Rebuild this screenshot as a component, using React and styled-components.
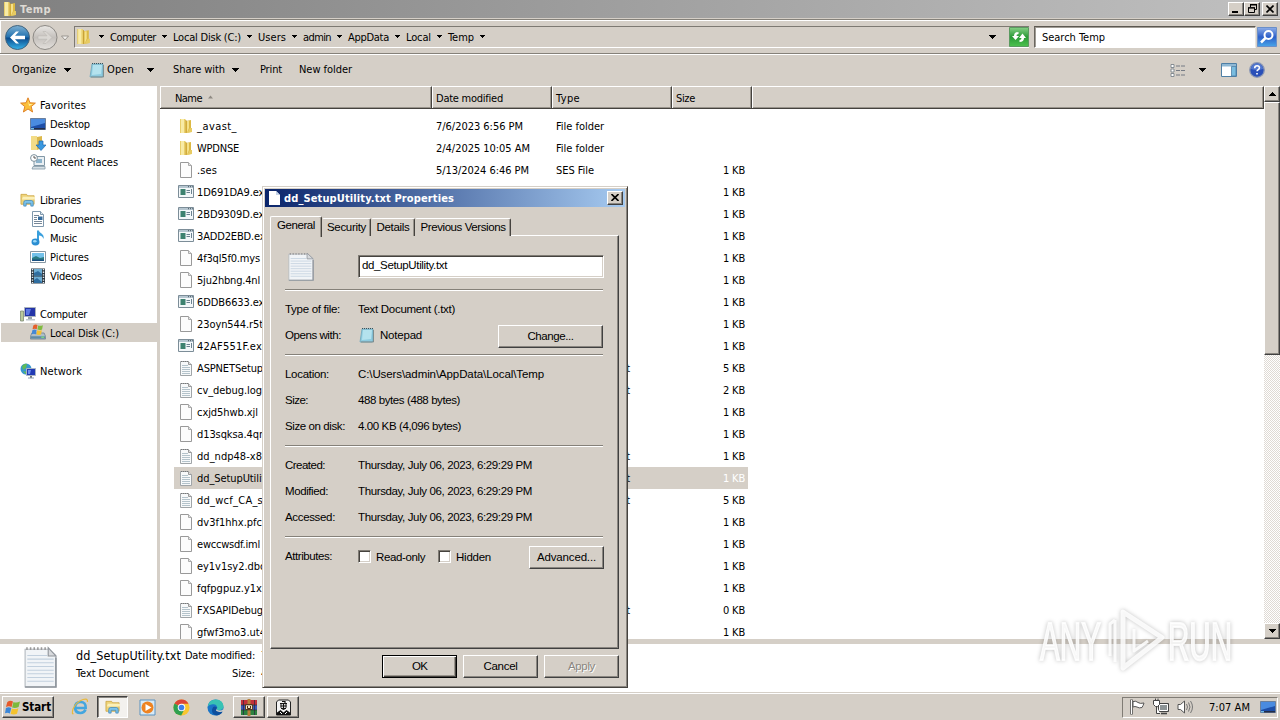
import React, { useLayoutEffect, useRef, useState } from "react";
import styled, { createGlobalStyle, css } from "styled-components";

const face = "#d5cfc7";
const tahoma = `"DejaVu Sans Condensed", "DejaVu Sans", "Noto Sans", sans-serif`;
const msSans = `"Liberation Sans", Arial, sans-serif`;

const Global = createGlobalStyle`
  * { box-sizing: border-box; }
  html, body { margin: 0; padding: 0; overflow: hidden; }
  body { font: 11px/14px ${tahoma}; font-stretch: condensed; color: #000; }
  svg { display: block; flex: none; }
`;

/* ---------- text with a set advance width ---------- */
const Span = styled.span`
  display: inline-block;
  white-space: pre;
  flex: none;
  margin-top: var(--drop, 2px);
`;
function Label({ w, children, ...rest }) {
  const ref = useRef(null);
  const [spacing, setSpacing] = useState(0);
  useLayoutEffect(() => {
    if (!w) return;
    const el = ref.current;
    el.style.letterSpacing = "0px";
    const s = (w - el.getBoundingClientRect().width) / String(children).length;
    el.style.letterSpacing = `${s}px`;
    setSpacing(s);
  }, [w, children]);
  return <Span ref={ref} style={{ letterSpacing: spacing }} {...rest}>{children}</Span>;
}

/* ---------- bevels ---------- */
const raised = css`
  background: ${face};
  border: 1px solid;
  border-color: #fff #404040 #404040 #fff;
  box-shadow: inset -1px -1px 0 #8a8680;
`;

/* ---------- frame ---------- */
const Desktop = styled.div`
  position: relative;
  width: 1280px;
  height: 720px;
  display: flex;
  flex-direction: column;
  background: ${face};
  overflow: hidden;
`;
const TitleBar = styled.div`
  height: 18px;
  flex: none;
  display: flex;
  align-items: center;
  padding: 0 2px 0 1px;
  background: linear-gradient(90deg, #808080, #c0c0c0);
  color: #dedad4;
  font-weight: bold;
`;
const TitleIcon = styled.div`width: 19px; padding-left: 1px;`;
const Grow = styled.div`flex: 1;`;
const WinButton = styled.button`
  ${raised}
  width: 16px;
  height: 14px;
  padding: 0;
  margin: 0 0 1px ${(p) => p.$gap || 0}px;
  display: flex;
  align-items: center;
  justify-content: center;
`;
const AddressRow = styled.div`
  height: 35px;
  flex: none;
  display: flex;
  align-items: center;
  margin-top: 1px;
  padding: 0 2px 0 4px;
  border-top: 1px solid #858179;
  border-bottom: 1px solid #858179;
  box-shadow: inset 1px 1px 0 #fff, 0 1px 0 #fff;
`;
const NavButtons = styled.div`display: flex; width: 70px; flex: none; padding-top: 1px;`;
const AddressBox = styled.div`
  height: 22px;
  width: 955px;
  flex: none;
  display: flex;
  align-items: center;
  border-top: 1px solid #7d7972;
  border-left: 1px solid #7d7972;
  border-bottom: 1px solid #fff;
`;
const ArrowCell = styled.span`
  width: ${(p) => p.$w || 17}px;
  flex: none;
  display: flex;
  justify-content: center;
`;
const SearchBox = styled.div`
  height: 22px;
  width: 222px;
  margin-left: 5px;
  padding-left: 7px;
  display: flex;
  align-items: center;
  background: #fff;
  border: 1px solid;
  border-color: #5c5851 #e8e4de #fff #6a665f;
  box-shadow: inset 1px 1px 0 #a09c95;
`;
const Toolbar = styled.div`
  --drop: 0px;
  height: 32px;
  flex: none;
  display: flex;
  align-items: center;
  padding: 0 15px 0 12px;
`;
const Gap = styled.span`width: ${(p) => p.$w}px; flex: none;`;

/* ---------- body ---------- */
const Body = styled.div`
  height: 553px;
  flex: none;
  display: flex;
`;
const NavPane = styled.nav`
  width: 160px;
  flex: none;
  padding-top: 9px;
  background: linear-gradient(90deg, #fff 157px, ${face} 157px);
`;
const NavItem = styled.div`
  height: 19px;
  margin-left: 1px;
  padding-left: ${(p) => (p.$sub ? 29 : 19)}px;
  margin-bottom: ${(p) => p.$after || 0}px;
  display: flex;
  align-items: center;
  gap: 4px;
  background: ${(p) => (p.$on ? face : "none")};
`;
const ListPane = styled.div`
  width: 1104px;
  flex: none;
  background: #fff;
  display: flex;
  flex-direction: column;
`;
const HeaderRow = styled.div`
  height: 23px;
  flex: none;
  display: flex;
  background: ${face};
  border-bottom: 1px solid #45423e;
`;
const HeaderCell = styled.div`
  width: ${(p) => p.$w}px;
  display: flex;
  align-items: center;
  gap: 6px;
  padding: 0 0 0 ${(p) => p.$pad || 3}px;
  border-top: 1px solid #fff;
  border-left: 1px solid #fff;
  border-right: 1px solid #45423e;
  box-shadow: inset -1px 0 0 #99948c, inset 0 -1px 0 #99948c;
`;
const Rows = styled.div`
  flex: 1;
  overflow: hidden;
  padding: 6px 0 0 14px;
`;
const Row = styled.div`
  width: 574px;
  height: 22px;
  display: grid;
  grid-template-columns: 19px 239px 120px 119px 1fr;
  align-items: center;
  padding-left: 4px;
  background: ${(p) => (p.$on ? face : "none")};
`;
const Size = styled.div`
  text-align: right;
  padding-right: 3px;
  color: ${(p) => (p.$on ? "#fff" : "#000")};
`;
const Scroll = styled.div`
  width: 16px;
  display: flex;
  flex-direction: column;
  background: repeating-conic-gradient(#fff 0 25%, #dfdad4 0 50%) 0 0 / 2px 2px;
`;
const ScrollButton = styled.div`
  ${raised}
  height: ${(p) => p.$h || 16}px;
  flex: none;
  display: flex;
  align-items: center;
  justify-content: center;
`;
const Details = styled.div`
  height: 53px;
  flex: none;
  display: flex;
  border-top: 5px solid ${face};
  background: #fff;
  padding: 2px 0 0 24px;
`;
const DetailText = styled.div`
  display: grid;
  grid-template-columns: 107px auto;
  grid-auto-rows: 18px;
  align-items: center;
  padding: 0 0 0 15px;
`;
const DetailName = styled.div`font-size: 12.5px; white-space: nowrap;`;
const DetailSize = styled.div`padding-left: ${(p) => p.$x || 0}px; display: flex; gap: 6px;`;

/* ---------- taskbar ---------- */
const Taskbar = styled.div`
  height: 28px;
  flex: none;
  display: flex;
  align-items: center;
  border-top: 1px solid ${face};
  box-shadow: inset 0 1px 0 #fff;
  padding: 3px 2px 2px 2px;
`;
const TaskButton = styled.button`
  --drop: 0px;
  ${raised}
  width: ${(p) => p.$w}px;
  height: 22px;
  padding: 0;
  margin: 0 ${(p) => p.$r || 0}px 0 0;
  display: flex;
  align-items: center;
  justify-content: center;
  gap: 2px;
  font: bold 11.5px/14px ${tahoma};
  font-stretch: condensed;
  color: #000;
  ${(p) => p.$down && css`
    background: #f3f1ee;
    border-color: #404040 #fff #fff #404040;
    box-shadow: inset 1px 1px 0 #8a8680;
  `}
`;
const Quick = styled.div`width: 34px; display: flex; justify-content: center;`;
const Tray = styled.div`
  width: 156px;
  height: 21px;
  display: flex;
  align-items: center;
  padding-left: 5px;
  border: 1px solid;
  border-color: #807c75 #fff #fff #807c75;
`;

/* ---------- dialog ---------- */
const Dialog = styled.section`
  --drop: 0px;
  position: absolute;
  left: 262px;
  top: 186px;
  width: 366px;
  height: 502px;
  padding: 2px;
  background: ${face};
  border: 1px solid;
  border-color: ${face} #45423e #45423e ${face};
  box-shadow: inset 1px 1px 0 #fff, inset -1px -1px 0 #8a8680;
  font: 11.5px/14px ${msSans};
`;
const DialogTitle = styled.header`
  --drop: 2px;
  height: 18px;
  display: flex;
  align-items: center;
  padding: 0 2px 0 2px;
  background: linear-gradient(90deg, #0a246a, #a6caf0);
  color: #fff;
  font: bold 11px/14px ${tahoma};
  font-stretch: condensed;
`;
const Tabs = styled.div`
  display: flex;
  align-items: flex-end;
  height: 20px;
  margin: 9px 0 -1px 5px;
`;
const Tab = styled.div`
  position: relative;
  z-index: ${(p) => (p.$on ? 1 : 0)};
  width: ${(p) => p.$w}px;
  height: ${(p) => (p.$on ? 21 : 18)}px;
  margin-bottom: ${(p) => (p.$on ? -1 : 0)}px;
  padding-top: 1px;
  text-align: center;
  background: ${face};
  border: 1px solid;
  border-color: #fff #45423e transparent ${(p) => (p.$on ? "#fff" : face)};
  border-bottom: 0;
  border-radius: 2px 2px 0 0;
  box-shadow: inset -1px 0 0 #99948c;
`;
const Page = styled.div`
  ${raised}
  width: 349px;
  height: 414px;
  margin-left: 5px;
  padding: 19px 14px 0 14px;
`;
const Line = styled.div`
  display: flex;
  align-items: center;
  height: ${(p) => p.$h || 26}px;
`;
const Key = styled.div`width: 73px; flex: none; padding: 0 0 ${(p) => p.$up || 0}px ${(p) => p.$x || 0}px;`;
const Rule = styled.hr`
  width: 318px;
  height: 2px;
  border: 0;
  border-top: 1px solid #858179;
  border-bottom: 1px solid #fff;
  margin: ${(p) => p.$t}px 0 ${(p) => p.$b}px;
`;
const Field = styled.div`
  width: 246px;
  height: 23px;
  padding: 0 3px 3px;
  background: #fff;
  border: 1px solid;
  border-color: #807c75 #fff #fff #807c75;
  box-shadow: inset 1px 1px 0 #45423e, inset -1px -1px 0 ${face};
  display: flex;
  align-items: center;
`;
const Button = styled.button`
  ${raised}
  width: ${(p) => p.$w || 75}px;
  height: 23px;
  flex: none;
  padding: 0 0 1px;
  margin: ${(p) => p.$t || 0}px 0 0 ${(p) => p.$l || 0}px;
  font: 11.5px/14px ${msSans};
  color: #000;
  ${(p) => p.$primary && css`
    border-color: #000;
    box-shadow: inset 1px 1px 0 #fff, inset -1px -1px 0 #45423e, inset -2px -2px 0 #99948c;
  `}
  ${(p) => p.$off && css`color: #8a8680; text-shadow: 1px 1px 0 #fff;`}
`;
const Check = styled.span`
  width: 13px;
  height: 13px;
  flex: none;
  margin: 0 5px 2px 0;
  background: #fff;
  border: 1px solid;
  border-color: #807c75 #fff #fff #807c75;
  box-shadow: inset 1px 1px 0 #45423e, inset -1px -1px 0 ${face};
`;
const Footer = styled.footer`
  display: flex;
  justify-content: flex-end;
  gap: 6px;
  padding: 6px 6px 0 0;
`;
const Watermark = styled.svg`
  position: absolute;
  left: 1032px;
  top: 602px;
  overflow: visible;
  filter: drop-shadow(0 0 2px rgba(0, 0, 0, 0.28));
`;

/* ---------- icons ---------- */
const Down = ({ s = 7, up }) => (
  <svg width={s} height={(s + 1) / 2} viewBox="0 0 8 4" preserveAspectRatio="none" shapeRendering="crispEdges">
    <path d={up ? "M4 0L8 4H0z" : "M0 0H8L4 4z"} fill="#000" />
  </svg>
);
const Folder = ({ s = 16 }) => (
  <svg width={s} height={s} viewBox="0 0 16 16">
    <path d="M2 1h5l1 1v13H2z" fill="#e9cf6c" />
    <path d="M3 1h3v14H3z" fill="#f8eba6" />
    <path d="M8 3l5-1v12l-5 1z" fill="#dcb944" />
    <path d="M9 3h2v7l-2 5z" fill="#f4e08a" />
    <path d="M12 10h2v4l-5 1z" fill="#e7cb63" />
    <path d="M8 2v13" stroke="#c49b2d" strokeWidth=".8" />
  </svg>
);
const Blank = () => (
  <svg width="16" height="16" viewBox="0 0 16 16">
    <path d="M2.5.5h8l3 3v12h-11z" fill="#fcfcfc" stroke="#999" />
    <path d="M10.5.5v3h3" fill="#e4e4e4" stroke="#aaa" />
  </svg>
);
const TextFile = () => (
  <svg width="16" height="16" viewBox="0 0 16 16">
    <path d="M2.5 1.5h8l3 3v11h-11z" fill="#f7f9fa" stroke="#a0a5a8" />
    <path d="M10.5 1.5v3h3" fill="#ddd" stroke="#999" />
    <path d="M4 5.5h6M4 7.5h8M4 9.5h8M4 11.5h8M4 13.5h8" stroke="#b4c3cb" />
    <path d="M3 1.5h7" stroke="#777" strokeDasharray="1 1" />
  </svg>
);
const Exe = () => (
  <svg width="16" height="16" viewBox="0 0 16 16">
    <path d="M.5 1.5h15v12H.5z" fill="#f4f8fa" stroke="#7c8d98" />
    <path d="M1 2h14v2H1z" fill="#b6c6d0" />
    <path d="M10 2.7h1M12 2.7h1M14 2.7h.8" stroke="#47555f" />
    <path d="M2.5 5h5v6h-5z" fill="#3d8270" />
    <path d="M8.5 6.5H12M8.5 8.5H12M13.5 5v5" stroke="#6b8290" />
  </svg>
);
const Note = ({ w = 26, h = 30 }) => (
  <svg width={w} height={h} viewBox="0 0 30 40" preserveAspectRatio="none">
    <path d="M1 3h22l6 6v30H1z" fill="#f1f4f7" stroke="#b3b8bf" />
    <path d="M3 9h18M3 12.5h24M3 16h24M3 19.5h24M3 23h24M3 26.5h24M3 30h24M3 33.5h24" stroke="#c2d0de" />
    <path d="M22 1.5v8h7z" fill="#d8dadd" stroke="#8f949a" />
    <path d="M2 2.500h20" stroke="#999" strokeWidth="2.500" strokeDasharray="1.4 1.9" />
    <path d="M1 39h28V11" stroke="#8f959c" strokeWidth="1.5" fill="none" />
  </svg>
);
const Notepad = () => (
  <svg width="16" height="16" viewBox="0 0 16 16">
    <path d="M3 2h11v12l-1 1H1z" fill="#8ecbdf" stroke="#6fa6ba" strokeWidth=".8" />
    <path d="M4 3h9l-1 9-9 1z" fill="#b4e2ee" />
    <path d="M14.5 3v12H2" stroke="#7e8d8e" fill="none" />
    <path d="M3 1.5h11" stroke="#39515b" strokeDasharray="1 1" />
  </svg>
);
const Star = () => (
  <svg width="16" height="16" viewBox="0 0 16 16">
    <path d="M8 .8l2 5 5.4.3-4.2 3.5 1.4 5.4L8 12l-4.6 3 1.4-5.4L.6 6.1 6 5.8z" fill="#fbbf3b" stroke="#dd7a1d" strokeWidth=".9" />
    <path d="M8 3l1.2 4H13L9 9z" fill="#fff0a0" />
  </svg>
);
const Screen = () => (
  <svg width="16" height="16" viewBox="0 0 16 16">
    <path d="M.5 2.5h15v11H.5z" fill="#1d4ea8" stroke="#6a7f9c" />
    <path d="M1 3h14v4L1 11z" fill="#4a8be0" />
    <path d="M1 12h14v1.5H1z" fill="#222d48" /><path d="M1 12h3v1.5H1z" fill="#6fb9e8" />
  </svg>
);
const Downloads = () => (
  <svg width="16" height="16" viewBox="0 0 16 16">
    <path d="M1 1h6v14H1z" fill="#f3dc87" /><path d="M7 2l5-1v12l-5 2z" fill="#dcb84b" />
    <path d="M9 6h4v4h3l-5 5.5L6 10h3z" fill="#3998e0" stroke="#1f68ae" strokeWidth=".7" />
  </svg>
);
const Recent = () => (
  <svg width="16" height="16" viewBox="0 0 16 16">
    <path d="M4 2.5h10.5v9H4z" fill="#e9eff3" stroke="#8298a6" />
    <path d="M6 5h6v4H6z" fill="#8db4cc" />
    <path d="M3 12.5h12v2.5H2z" fill="#d7e0e5" stroke="#8298a6" strokeWidth=".8" />
    <circle cx="4" cy="4" r="3.4" fill="#fff" stroke="#7c909c" /><path d="M4 2v2h2" stroke="#555" fill="none" />
  </svg>
);
const Library = () => (
  <svg width="16" height="16" viewBox="0 0 17 16">
    <path d="M1 2h6l1 1.5h7v9H1z" fill="#eed37a" stroke="#c9a23e" strokeWidth=".8" />
    <path d="M3 4.5h13v3H2z" fill="#fbf0b9" />
    <path d="M4 14.5v-4q0-2 2-2h6q2 0 2 2v4h-2.5v-3h-5v3z" fill="#7cc3ec" stroke="#3d87bb" strokeWidth=".8" />
  </svg>
);
const Docs = () => (
  <svg width="16" height="16" viewBox="0 0 16 16">
    <path d="M2.5.5h8l3 3v12h-11z" fill="#fff" stroke="#7f98ad" />
    <path d="M10.5.5v3h3" fill="#dce6ee" stroke="#7f98ad" />
    <path d="M4 4.5h5M4 6.5h3M4 8.5h3M4 10.5h8M4 12.5h8" stroke="#789" />
    <path d="M8 5.5h4.5v3.5H8z" fill="#356b9c" />
  </svg>
);
const MusicIcon = () => (
  <svg width="16" height="16" viewBox="0 0 16 16">
    <path d="M7 .5h2c0 3 6 3 4.500 8.500-1-3-2.500-3.500-4.500-3.500v7H7z" fill="#3aa0dd" />
    <ellipse cx="5.5" cy="12" rx="4" ry="3.4" fill="#2b8ed2" /><ellipse cx="4.8" cy="11.2" rx="1.8" ry="1.3" fill="#9bd8f7" />
  </svg>
);
const Pics = () => (
  <svg width="16" height="16" viewBox="0 0 16 16">
    <path d="M.5 2.5h15v11H.5z" fill="#fff" stroke="#8797a3" />
    <path d="M2 4h12v8H2z" fill="#73c1ea" /><path d="M2 9l4-2 4 2 4-1v4H2z" fill="#297b83" /><path d="M2 10.5h12V12H2z" fill="#184f80" />
  </svg>
);
const Video = () => (
  <svg width="16" height="16" viewBox="0 0 16 16">
    <path d="M1 .5h14v15H1z" fill="#2c3842" />
    <path d="M4 1h8v6.5H4zM4 8.5h8V15H4z" fill="#6eaed4" />
    <path d="M4 5l4-2 4 3v1.5H4zM4 12l3-2 5 4v1H4z" fill="#2f6ea0" />
    <path d="M2.5 1v14M13.5 1v14" stroke="#e8eef2" strokeWidth="1.4" strokeDasharray="1.3 1.3" />
  </svg>
);
const Computer = () => (
  <svg width="16" height="16" viewBox="0 0 16 16">
    <path d="M.5 5h3v10h-3z" fill="#b9c99a" stroke="#7d8c76" strokeWidth=".8" />
    <path d="M4.5 1.5h11v9h-11z" fill="#2334a8" stroke="#aab3bd" />
    <path d="M6 3h5l-2 6H6z" fill="#5c78e2" /><path d="M8 11h4v2H8z" fill="#97a2ab" /><path d="M6 13h9v1.5H6z" fill="#bcc6cd" />
  </svg>
);
const WinFlag = ({ s = 16 }) => (
  <svg width={s} height={s} viewBox="0 0 16 16">
    <path d="M2.500 2q3-2 6-.5L7 7.500Q4 6 1 7.5z" fill="#e6592a" />
    <path d="M9 2q3 1.500 7-.5l-1.500 6Q11 9 7.600 8z" fill="#7cb93b" />
    <path d="M1 8.500q3-1.500 5.700 0L5.200 14.500Q3 13 0 14z" fill="#3a86d8" />
    <path d="M7.300 9q3 1.500 7-.3l-1.500 6Q10 16 6 15z" fill="#f5c32d" />
  </svg>
);
const Disk = () => (
  <svg width="16" height="17" viewBox="0 0 17 17">
    <path d="M2 9h13l1.5 3.500v3H.5v-3z" fill="#aebdc8" stroke="#6d7f8c" strokeWidth=".8" />
    <path d="M1 12.5h15v2.500H1z" fill="#5f8ba5" /><path d="M12 13.5h3" stroke="#83ec76" strokeWidth="1.2" />
    <path d="M3.500 1q2-1.500 4.500-.5l-.8 4.500Q5 4 2.700 5z" fill="#e5602c" /><path d="M8.700 1q2 1 5-.3l-.9 4.500q-2 1-5 .2z" fill="#80bb3f" />
    <path d="M2.500 6q2-1 4.500-.2L6.300 10.400Q4 9.400 1.700 10.400z" fill="#4388d5" /><path d="M7.600 6.200q2 1 5 0l-.9 4.500q-2 1-4.900 0z" fill="#f2c134" />
  </svg>
);
const NetworkIcon = () => (
  <svg width="16" height="16" viewBox="0 0 16 16">
    <circle cx="6" cy="6" r="5.5" fill="#3796cf" /><path d="M2 3q3-3 5-2l-1 4-3 2zM3 8l4 1-1 2.500z" fill="#5ebb58" />
    <path d="M6.5 5.5h9v7h-9z" fill="#213bb5" stroke="#a9b5c4" /><path d="M8 7h3l-1 4H8z" fill="#6d8df0" />
    <path d="M10 13h2v2h-2z" fill="#777" /><path d="M8 15h6" stroke="#8ba0b1" />
  </svg>
);
const BackBtn = () => (
  <svg width="27" height="27" viewBox="0 0 27 27">
    <defs><linearGradient id="bk" x2="0" y2="1"><stop stopColor="#7eb0d2" /><stop offset=".48" stopColor="#2272b0" /><stop offset=".52" stopColor="#0a4a8c" /><stop offset="1" stopColor="#37b4ea" /></linearGradient></defs>
    <circle cx="13.5" cy="13.5" r="12" fill="url(#bk)" stroke="#42647d" />
    <path d="M6 13.5l6-6h3l-4 4.300h10v3.400H11l4 4.300h-3z" fill="#fff" />
  </svg>
);
const FwdBtn = () => (
  <svg width="27" height="27" viewBox="0 0 27 27">
    <defs><linearGradient id="fw" x2="0" y2="1"><stop stopColor="#e9e7e4" /><stop offset=".5" stopColor="#c4c0bc" /><stop offset="1" stopColor="#e4e1dd" /></linearGradient></defs>
    <circle cx="14" cy="13.5" r="12" fill="url(#fw)" stroke="#8c8984" />
    <path d="M21 13.5l-6-6h-3l4 4.300H7v3.400h9l-4 4.300h3z" fill="#dad7d3" stroke="#bbb7b2" strokeWidth=".6" />
  </svg>
);
const Refresh = () => (
  <svg width="20" height="20" viewBox="0 0 20 20">
    <defs><linearGradient id="rf" x2="0" y2="1"><stop stopColor="#86cf86" /><stop offset=".5" stopColor="#2a9a36" /><stop offset="1" stopColor="#4cc24e" /></linearGradient></defs>
    <path d="M.5.5h19v19H.5z" fill="url(#rf)" stroke="#5a9a60" />
    <path d="M3 9h2q0-4 4.500-4v2Q7.500 7 7.500 9H10l-3.500 4zM17 11h-2q0 4-4.500 4v-2q2 0 2-2H10l3.500-4.500z" fill="#fff" />
  </svg>
);
const SearchIcon = () => (
  <svg width="20" height="20" viewBox="0 0 20 20">
    <defs><linearGradient id="sr" x2="0" y2="1"><stop stopColor="#8eaee8" /><stop offset=".5" stopColor="#2d5fc9" /><stop offset="1" stopColor="#48a5e8" /></linearGradient></defs>
    <path d="M.5.5h19v19H.5z" fill="url(#sr)" stroke="#6b8fc8" />
    <circle cx="11.5" cy="8" r="4" fill="none" stroke="#fff" strokeWidth="2" /><path d="M8.500 11L4 15.500" stroke="#fff" strokeWidth="2.5" />
  </svg>
);
const Views = () => (
  <svg width="16" height="13" viewBox="0 0 16 13">
    <path d="M1 .5h3v3H1zM1 5h3v3H1zM1 9.500h3v3H1z" fill="#fff" stroke="#7b838b" strokeWidth=".9" />
    <path d="M6 2h4M11 2h4M6 6.500h4M11 6.500h4M6 11h4M11 11h4" stroke="#757b84" />
  </svg>
);
const Preview = () => (
  <svg width="16" height="14" viewBox="0 0 16 14">
    <path d="M.5.5h15v13H.5z" fill="#fff" stroke="#4e7fa5" /><path d="M1 1h14v2.500H1z" fill="#8fb8d4" />
    <path d="M10.500 3.500h4.500V13h-4.500z" fill="#79bde0" stroke="#4e7fa5" strokeWidth=".8" />
  </svg>
);
const Help = () => (
  <svg width="16" height="16" viewBox="0 0 16 16">
    <circle cx="8" cy="8" r="7.3" fill="#2a4fb8" stroke="#8d99b5" strokeWidth="1.3" /><path d="M2 7a6 5.500 0 0112 0q-6 2-12 0z" fill="#6e92de" opacity=".6" />
    <path d="M5.700 6.200q0-2.400 2.400-2.400t2.300 2q0 1.200-1.300 1.900-1 .5-1 1.600M8 11v1.500" fill="none" stroke="#fff" strokeWidth="1.6" />
  </svg>
);
const IE = () => (
  <svg width="18" height="18" viewBox="0 0 18 18">
    <path d="M4.500 10h10.200q.3-6-5.200-6t-5.500 6q.5 5 5.500 5 3.500 0 5-3.200" fill="none" stroke="#43a6df" strokeWidth="2.6" />
    <path d="M2.500 15.500Q.5 17 2 11 5 4 12 1.500q5-1.500 4.500 2.500" fill="none" stroke="#e9b93c" strokeWidth="1.2" />
  </svg>
);
const Media = () => (
  <svg width="17" height="17" viewBox="0 0 17 17">
    <path d="M1 1h15v15H1z" fill="#d8eaf6" stroke="#5a92c0" /><circle cx="8.5" cy="8.5" r="6" fill="#ee8322" /><path d="M6.500 5l6 3.500-6 3.500z" fill="#fff" />
  </svg>
);
const Chrome = () => (
  <svg width="17" height="17" viewBox="0 0 18 18">
    <circle cx="9" cy="9" r="8.5" fill="#f9c62f" /><path d="M9 9L1.600 4.700A8.500 8.500 0 0116.400 5H9z" fill="#dc4437" />
    <path d="M9 9L1.600 4.700A8.500 8.500 0 008.700 17.500L12 11z" fill="#2fa050" /><circle cx="9" cy="9" r="4" fill="#fff" /><circle cx="9" cy="9" r="3" fill="#3f7fe8" />
  </svg>
);
const Edge = () => (
  <svg width="17" height="17" viewBox="0 0 18 18">
    <circle cx="9" cy="9" r="8.5" fill="#1b75c7" /><path d="M.7 8Q2 .5 9.500.5q7.500.5 8 7 0 4-4.500 4.500-4-.2-2-3Q10 5 6 5.500 2 5.700.7 8z" fill="#38c3b4" />
    <path d="M10.500 9q-2 5 6 4.500-2 3.500-6 4Q4 16 5.500 10.500 7 6.500 10.500 9z" fill="#0e4f9e" /><path d="M11 9q-1.500 3 2 3.200 3 .3 4.500-2v3Q12 14.500 9.500 12.500z" fill="#d5cfc7" />
  </svg>
);
const Rar = () => (
  <svg width="18" height="17" viewBox="0 0 18 17">
    <path d="M1 1h16v5H1z" fill="#c2303a" /><path d="M1 6h16v5H1z" fill="#3d58b5" /><path d="M1 11h16v5H1z" fill="#2c8242" />
    <path d="M7.500 0h3v17h-3z" fill="#b9803a" /><path d="M5.500 5.500h7v5h-7z" fill="#f2e4c5" stroke="#6a431d" /><path d="M7.500 7v2.500h3V7" stroke="#4a2c12" fill="none" />
    <path d="M3.500 1v15M14.500 1v15" stroke="#2a2540" strokeWidth=".7" /><path d="M1 6h16M1 11h16" stroke="#222" strokeWidth=".5" />
  </svg>
);
const Agent = () => (
  <svg width="17" height="17" viewBox="0 0 17 17">
    <path d="M1.500 3l2-2h10l2 2v13h-14z" fill="#f4f4f4" stroke="#222" />
    <path d="M5 4.500h7M7 2.500h3v2M8.500 4.500v6M5.500 7h6M6 9.500h5" stroke="#111" strokeWidth="1.2" fill="none" />
    <path d="M6 4.500v4q2.500 4 5 0v-4" fill="none" stroke="#111" />
    <path d="M2 16v-2.500l3.500-2.500 3 2.500 3-2.500 3.500 2.500V16z" fill="#111" /><path d="M5 13l2 2M12 13l-2 2" stroke="#fff" />
  </svg>
);
const Flag = () => (
  <svg width="18" height="18" viewBox="0 0 18 18">
    <path d="M3.500 1.500v15" stroke="#555" strokeWidth="2.6" /><path d="M3.500 2v14" stroke="#fff" strokeWidth="1" />
    <path d="M5 3.500q3-1 5 1 2 1.500 6 .5-1 3-2 4.500-3 1-5-.5-2-1-4 0z" fill="#fff" stroke="#555" />
  </svg>
);
const TrayNet = () => (
  <svg width="18" height="18" viewBox="0 0 18 18">
    <path d="M6.500 5.500h10v8h-10z" fill="#8d9496" stroke="#444" /><path d="M7.500 6.500h8v6h-8z" fill="none" stroke="#fff" />
    <path d="M9 15.500h6" stroke="#444" strokeWidth="1.6" /><path d="M1.500 2.500h6v4l-2 2h-2l-2-2zM4.500 8v7.500H8" fill="#fff" stroke="#444" /><path d="M3.500.5v2M6 .5v2" stroke="#444" />
  </svg>
);
const Speaker = () => (
  <svg width="18" height="18" viewBox="0 0 18 18">
    <path d="M2 6.500h2.500L8.500 3v12l-4-3.500H2z" fill="#fff" stroke="#555" /><path d="M10.500 6q2 3 0 6M12.500 4.500q3 4.500 0 9M14.500 3q4 6 0 12" fill="none" stroke="#777" />
  </svg>
);

/* ---------- data ---------- */
const nav = [
  ["Favorites", 46, Star, 0],
  ["Desktop", 40, Screen, 1],
  ["Downloads", 53, Downloads, 1],
  ["Recent Places", 68, Recent, 1, 19],
  ["Libraries", 41, Library, 0],
  ["Documents", 54, Docs, 1],
  ["Music", 27, MusicIcon, 1],
  ["Pictures", 39, Pics, 1],
  ["Videos", 32, Video, 1, 19],
  ["Computer", 47, Computer, 0],
  ["Local Disk (C:)", 69, Disk, 1, 19],
  ["Network", 42, NetworkIcon, 0],
];
const kinds = { d: Folder, b: Blank, e: Exe, t: TextFile };
const typeName = { d: ["File folder", 48], b: ["File", 17], e: ["Application", 54], t: ["Text Document", 74] };
const files = [
  ["_avast_", 40, "d", "", "7/6/2023 6:56 PM", 87],
  ["WPDNSE", 42, "d", "", "2/4/2025 10:05 AM", 94],
  [".ses", 20, "b", "1", "5/13/2024 6:46 PM", 93],
  ["1D691DA9.exe", 73, "e", "1"],
  ["2BD9309D.exe", 73, "e", "1"],
  ["3ADD2EBD.exe", 74, "e", "1"],
  ["4f3ql5f0.mys", 63, "b", "1"],
  ["5ju2hbng.4nl", 63, "b", "1"],
  ["6DDB6633.exe", 73, "e", "1"],
  ["23oyn544.r5t", 66, "b", "1"],
  ["42AF551F.exe", 71, "e", "1"],
  ["ASPNETSetup", 66, "t", "5"],
  ["cv_debug.log", 65, "t", "2"],
  ["cxjd5hwb.xjl", 61, "b", "1"],
  ["d13sqksa.4qr", 66, "b", "1"],
  ["dd_ndp48-x8", 65, "t", "1"],
  ["dd_SetupUtility.txt", 89, "t", "1"],
  ["dd_wcf_CA_s", 66, "t", "5"],
  ["dv3f1hhx.pfc", 65, "b", "1"],
  ["ewccwsdf.iml", 63, "b", "1"],
  ["ey1v1sy2.dbo", 69, "b", "1"],
  ["fqfpgpuz.y1x", 65, "b", "1"],
  ["FXSAPIDebug", 66, "t", "0"],
  ["gfwf3mo3.ut4", 69, "b", "1"],
];
const crumbs = [["Computer", 46], ["Local Disk (C:)", 68], ["Users", 28], ["admin", 28], ["AppData", 41], ["Local", 25], ["Temp", 26]];
const stamp = "Thursday, July 06, 2023, 6:29:29 PM";

const Info = ({ k, kw, v, vw }) => (
  <Line><Key><Label w={kw}>{k}</Label></Key><Label w={vw}>{v}</Label></Line>
);

function Properties() {
  return (
    <Dialog>
      <DialogTitle>
        <svg width="16" height="14" viewBox="0 0 16 14"><path d="M2 0h7l4 4v10H2z" fill="#fff" /><path d="M9 0v4h4" fill="#c5d4e8" /></svg>
        <Gap $w={1} /><Label w={170}>dd_SetupUtility.txt Properties</Label>
        <Grow />
        <WinButton><svg width="8" height="7" viewBox="0 0 8 7"><path d="M.5 0L7.500 7M7.500 0L.5 7" stroke="#000" strokeWidth="1.6" /></svg></WinButton>
      </DialogTitle>
      <Tabs>
        <Tab $on $w={52}><Label w={38}>General</Label></Tab>
        <Tab $w={49}><Label w={39}>Security</Label></Tab>
        <Tab $w={44}><Label w={33}>Details</Label></Tab>
        <Tab $w={96}><Label w={85}>Previous Versions</Label></Tab>
      </Tabs>
      <Page>
        <Line $h={23}>
          <Key $x={3} $up={1}><Note w={26} h={29} /></Key>
          <Field><Label w={85}>dd_SetupUtility.txt</Label></Field>
        </Line>
        <Rule $t={11} $b={5} />
        <Info k="Type of file:" kw={55} v="Text Document (.txt)" vw={97} />
        <Line>
          <Key><Label w={56}>Opens with:</Label></Key>
          <Gap $w={1} /><Notepad /><Gap $w={5} /><Label w={42}>Notepad</Label><Button $w={105} $l={76} $t={2}><Label w={46}>Change...</Label></Button>
        </Line>
        <Rule $t={6} $b={5} />
        <Info k="Location:" kw={44} v="C:\Users\admin\AppData\Local\Temp" vw={186} />
        <Info k="Size:" kw={23} v="488 bytes (488 bytes)" vw={102} />
        <Info k="Size on disk:" kw={60} v="4.00 KB (4,096 bytes)" vw={103} />
        <Rule $t={6} $b={5} />
        <Info k="Created:" kw={40} v={stamp} vw={174} />
        <Info k="Modified:" kw={43} v={stamp} vw={174} />
        <Info k="Accessed:" kw={50} v={stamp} vw={174} />
        <Rule $t={6} $b={6} />
        <Line>
          <Key $up={2}><Label w={47}>Attributes:</Label></Key>
          <Check /><Label w={49}>Read-only</Label>
          <Gap $w={13} /><Check /><Label w={35}>Hidden</Label>
          <Button $l={38}><Label w={59}>Advanced...</Label></Button>
        </Line>
      </Page>
      <Footer>
        <Button $primary><Label w={15}>OK</Label></Button>
        <Button><Label w={34}>Cancel</Label></Button>
        <Button $off><Label w={27}>Apply</Label></Button>
      </Footer>
    </Dialog>
  );
}

export default function App() {
  return (
    <Desktop>
      <Global />
      <TitleBar>
        <TitleIcon><Folder /></TitleIcon>
        <Label w={31}>Temp</Label>
        <Grow />
        <WinButton><svg width="8" height="8"><path d="M0 6h6v2H0z" /></svg></WinButton>
        <WinButton><svg width="9" height="9"><path d="M2.500 1v2M2 1h6.500v4.500H7M2 .5h7M.5 4h6v4.500h-6zM0 3.700h7" fill="none" stroke="#000" /></svg></WinButton>
        <WinButton $gap={2}><svg width="8" height="8"><path d="M.5.5l7 7M7.500.5l-7 7" stroke="#000" strokeWidth="1.6" /></svg></WinButton>
      </TitleBar>
      <AddressRow>
        <NavButtons>
          <BackBtn /><FwdBtn />
          <ArrowCell $w={14}><svg width="8" height="27"><path d="M.5 12h7L4 16z" fill="#f1efec" stroke="#8a8680" strokeWidth=".8" /></svg></ArrowCell>
        </NavButtons>
        <AddressBox>
          <Folder s={17} /><ArrowCell $w={18}><Down s={5} /></ArrowCell>
          {crumbs.map(([t, w]) => (
            <React.Fragment key={t}><Label w={w}>{t}</Label><ArrowCell><Down s={5} /></ArrowCell></React.Fragment>
          ))}
          <Grow /><ArrowCell $w={33}><Down /></ArrowCell><Refresh />
        </AddressBox>
        <SearchBox><Label w={63}>Search Temp</Label></SearchBox>
        <Gap $w={1} /><SearchIcon />
      </AddressRow>
      <Toolbar>
        <Label w={44}>Organize</Label><Gap $w={8} /><Down /><Gap $w={18} />
        <Notepad /><Gap $w={2} /><Label w={27}>Open</Label><Gap $w={13} /><Down /><Gap $w={19} />
        <Label w={52}>Share with</Label><Gap $w={7} /><Down /><Gap $w={21} />
        <Label w={22}>Print</Label><Gap $w={17} /><Label w={53}>New folder</Label>
        <Grow />
        <Views /><Gap $w={13} /><Down /><Gap $w={15} /><Preview /><Gap $w={12} /><Help />
      </Toolbar>
      <Body>
        <NavPane>
          {nav.map(([t, w, Icon, sub, after]) => (
            <NavItem key={t} $sub={sub} $after={after} $on={t === "Local Disk (C:)"}><Icon /><Label w={w}>{t}</Label></NavItem>
          ))}
        </NavPane>
        <ListPane>
          <HeaderRow>
            <HeaderCell $w={272} $pad={14}><Label w={27}>Name</Label><svg width="5" height="8"><path d="M2.500 1.500L5 4.500H0z" fill="#8f8a83" /></svg></HeaderCell>
            <HeaderCell $w={120}><Label w={67}>Date modified</Label></HeaderCell>
            <HeaderCell $w={120}><Label w={24}>Type</Label></HeaderCell>
            <HeaderCell $w={80}><Label w={19}>Size</Label></HeaderCell>
            <HeaderCell $w={512} />
          </HeaderRow>
          <Rows>
            {files.map(([name, w, kind, kb, date, dw], i) => {
              const Icon = kinds[kind];
              const [type, tw] = name === ".ses" ? ["SES File", 38] : typeName[kind];
              const on = i === 16;
              return (
                <Row key={name} $on={on}>
                  <Icon s={16} />
                  <div><Label w={w}>{name}</Label></div>
                  <div>{date && <Label w={dw}>{date}</Label>}</div>
                  <div><Label w={tw}>{type}</Label></div>
                  <Size $on={on}>{kb && <Label w={22}>{`${kb} KB`}</Label>}</Size>
                </Row>
              );
            })}
          </Rows>
        </ListPane>
        <Scroll>
          <ScrollButton><Down up /></ScrollButton>
          <ScrollButton $h={253} />
          <Grow />
          <ScrollButton><Down /></ScrollButton>
        </Scroll>
      </Body>
      <Details>
        <Note w={33} h={42} />
        <Gap $w={4} />
        <DetailText>
          <DetailName><Label w={105}>dd_SetupUtility.txt</Label></DetailName>
          <DetailSize $x={2}><Label w={70}>Date modified:</Label><Label>7/6/2023</Label></DetailSize>
          <div><Label w={73}>Text Document</Label></div>
          <DetailSize $x={49}><Label w={23}>Size:</Label><Label>488 bytes</Label></DetailSize>
        </DetailText>
      </Details>
      <Taskbar>
        <TaskButton $w={52} $r={9}><WinFlag s={15} /><Label w={29}>Start</Label></TaskButton>
        <Quick><IE /></Quick>
        <TaskButton $w={31} $r={2} $down><Library /></TaskButton>
        <Quick><Media /></Quick><Quick><Chrome /></Quick><Quick><Edge /></Quick>
        <Gap $w={1} />
        <TaskButton $w={32} $r={2}><Rar /></TaskButton>
        <TaskButton $w={32}><Agent /></TaskButton>
        <Grow />
        <Tray>
          <Flag /><Gap $w={6} /><TrayNet /><Gap $w={6} /><Speaker />
          <Gap $w={15} /><Label w={41}>7:07 AM</Label><Gap $w={10} /><Screen />
        </Tray>
      </Taskbar>
      <Watermark width="208" height="78" viewBox="0 0 208 78">
        <g fill="#fff" fillOpacity=".85" fontFamily="Liberation Sans Narrow, Liberation Sans" fontSize="53" stroke="#fff" strokeOpacity=".85" strokeWidth="1.8">
          <text x="8" y="58" textLength="61" lengthAdjust="spacingAndGlyphs">ANY</text>
          <text x="136" y="58" textLength="64" lengthAdjust="spacingAndGlyphs">RUN</text>
        </g>
        <g fill="none" stroke="#fff" strokeOpacity=".85" strokeWidth="5" strokeLinejoin="round">
          <path d="M91 10L130 35.5 91 66z" />
          <path d="M83 18v42M78 54V22l5-4M102 27v22l14-10" strokeWidth="3" />
        </g>
      </Watermark>
      <Properties />
    </Desktop>
  );
}
